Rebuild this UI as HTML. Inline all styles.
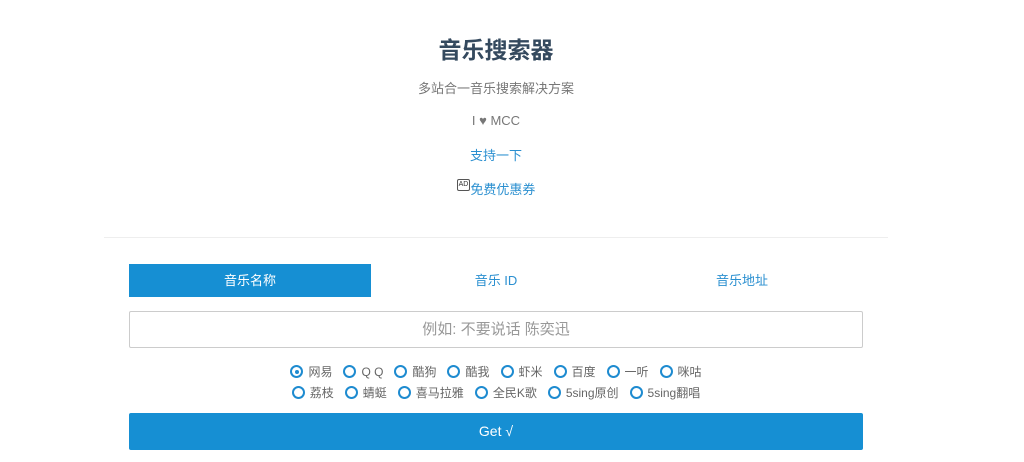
<!DOCTYPE html><html><head><meta charset="utf-8"><style>
body{margin:0;width:1024px;height:462px;background:#fff;font-family:"Liberation Sans","Noto Sans CJK SC",sans-serif;position:relative;overflow:hidden}
.c{position:absolute;left:0;width:992px;text-align:center}
h1{margin:0;font-size:23px;font-weight:bold;color:#34495e}
.s{font-size:13px;color:#777}
.l{font-size:13px;color:#2a8fd0}
.hr{position:absolute;left:104px;width:784px;top:237px;border-top:1px solid #eee}
.tabs{position:absolute;left:129px;top:264px;width:734px;height:33px;display:flex;gap:4px}
.tabs div{width:242px;text-align:center;line-height:33px;font-size:13px;color:#2a8fd0}
.tabs .a{background:#168fd3;color:#fff}
.inp{position:absolute;left:129px;top:311px;width:732px;height:35px;border:1px solid #ccc;text-align:center;line-height:35px;font-size:15px;color:#999;border-radius:2px}
.r{position:absolute;left:0;width:992px;display:flex;justify-content:center;font-size:12px;color:#666;gap:11px}
.r span{display:flex;align-items:center}
.r i{display:inline-block;width:9px;height:9px;border:2px solid #1e8bd0;border-radius:50%;margin-right:5px;position:relative}
.r i.k::after{content:"";position:absolute;left:2.5px;top:2.5px;width:4px;height:4px;border-radius:50%;background:#1e8bd0}
.btn{position:absolute;left:129px;top:413px;width:734px;height:37px;background:#168fd3;color:#fff;text-align:center;line-height:37px;font-size:14px;border-radius:2px}
</style></head><body>
<div class="c" style="top:31px"><h1>音乐搜索器</h1></div>
<div class="c s" style="top:78px">多站合一音乐搜索解决方案</div>
<div class="c s" style="top:113px">I ♥ MCC</div>
<div class="c l" style="top:145px">支持一下</div>
<div class="c l" style="top:179px"><span style="display:inline-block;border:1px solid #555;border-radius:2px;font-size:7px;color:#333;padding:0 1px;line-height:10px;vertical-align:top;margin-top:0">AD</span>免费优惠券</div>
<div class="hr"></div>
<div class="tabs"><div class="a">音乐名称</div><div>音乐 ID</div><div>音乐地址</div></div>
<div class="inp">例如: 不要说话 陈奕迅</div>
<div class="r" style="top:363px"><span><i class="k"></i>网易</span><span><i></i>Q Q</span><span><i></i>酷狗</span><span><i></i>酷我</span><span><i></i>虾米</span><span><i></i>百度</span><span><i></i>一听</span><span><i></i>咪咕</span></div>
<div class="r" style="top:384px"><span><i></i>荔枝</span><span><i></i>蜻蜓</span><span><i></i>喜马拉雅</span><span><i></i>全民K歌</span><span><i></i>5sing原创</span><span><i></i>5sing翻唱</span></div>
<div class="btn">Get √</div>
</body></html>
